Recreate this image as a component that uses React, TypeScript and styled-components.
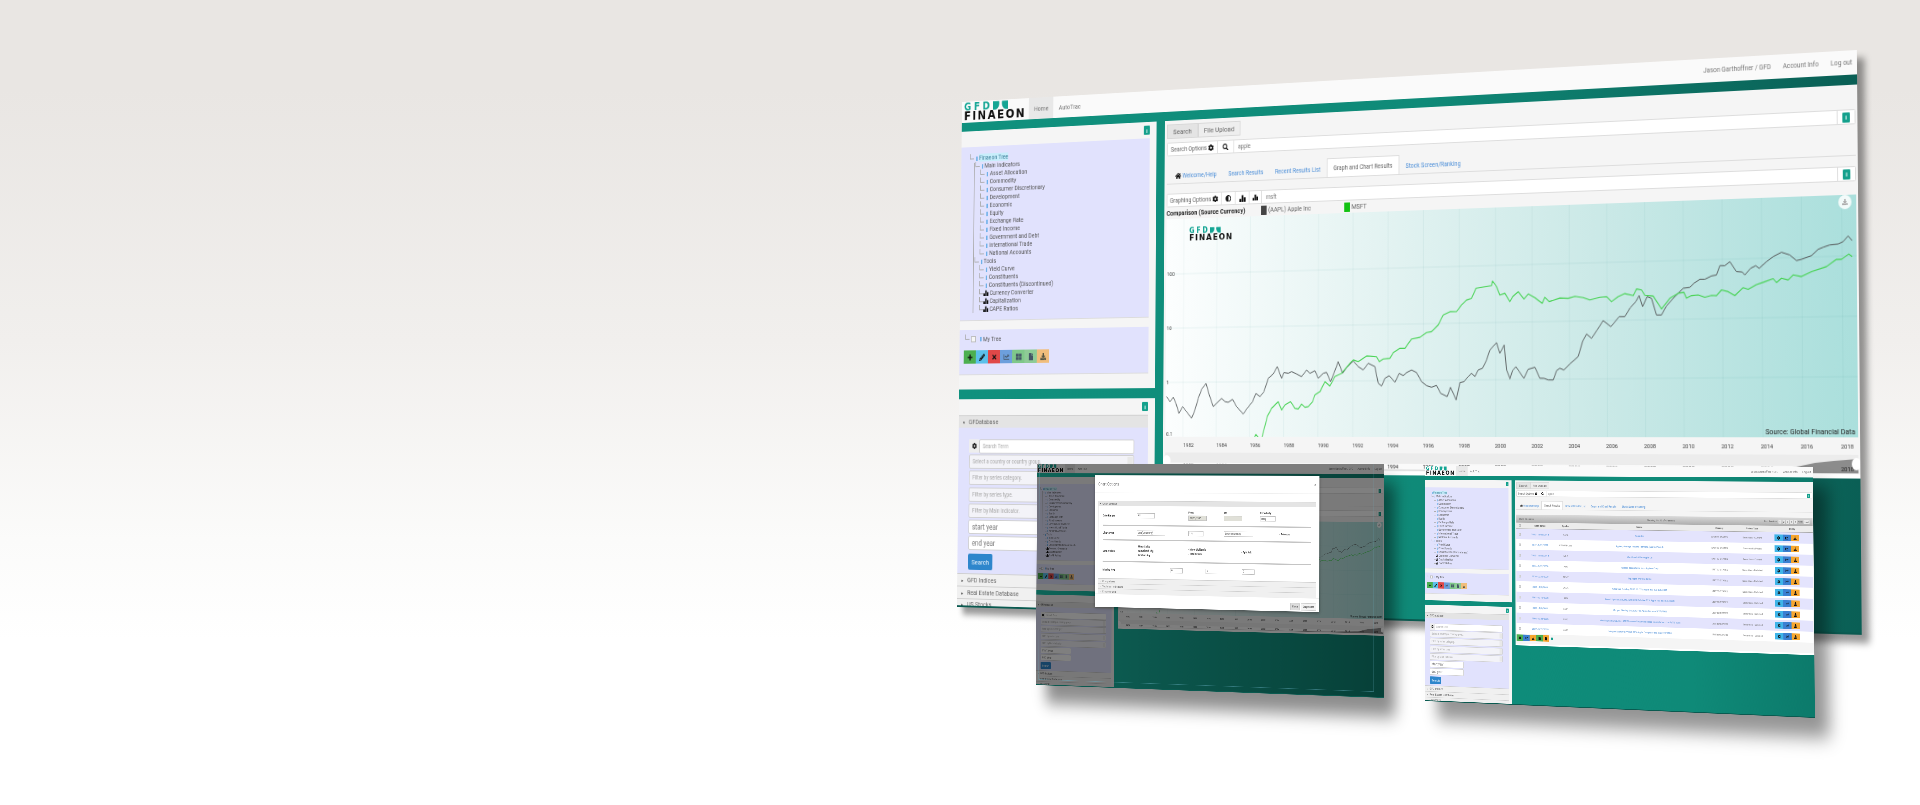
import React from "react";
import styled, { createGlobalStyle } from "styled-components";
import {
  FaAdjust, FaChartLine, FaCog, FaDownload, FaFile, FaHome,
  FaPencilAlt, FaPlus, FaSearch, FaThLarge, FaTimes,
} from "react-icons/fa";

// every screenshot in the banner is a normal 1100x570 page, put in perspective
const W = 1100;
const H = 570;

type Pt = [number, number];

const MAIN_QUAD: Pt[] = [[962, 102], [1857, 50], [1862, 635], [957, 607]];
const MODAL_QUAD: Pt[] = [[1037, 464], [1384, 464], [1384, 698], [1036, 685]];
const RESULTS_QUAD: Pt[] = [[1425, 466], [1813, 467], [1815, 718], [1425, 701]];

function solveQuad(q: Pt[]) {
  const [[x0, y0], [x1, y1], [x2, y2], [x3, y3]] = q;
  const dx1 = x1 - x2, dx2 = x3 - x2, sx = x0 - x1 + x2 - x3;
  const dy1 = y1 - y2, dy2 = y3 - y2, sy = y0 - y1 + y2 - y3;
  const det = dx1 * dy2 - dx2 * dy1;
  const g = (sx * dy2 - dx2 * sy) / det;
  const h = (dx1 * sy - sx * dy1) / det;
  return {
    a: x1 - x0 + g * x1, b: x3 - x0 + h * x3, c: x0,
    d: y1 - y0 + g * y1, e: y3 - y0 + h * y3, f: y0,
    g, h,
  };
}

function quadMatrix(q: Pt[]) {
  const { a, b, c, d, e, f, g, h } = solveQuad(q);
  return `matrix3d(${[a / W, d / W, 0, g / W, b / H, e / H, 0, h / H, 0, 0, 1, 0, c, f, 0, 1].join(",")})`;
}

// page position -> position inside the main screen
function toMainLocal(x: number, y: number): Pt {
  const { a, b, c, d, e, f, g, h } = solveQuad(MAIN_QUAD);
  const w = (d * h - e * g) * x + (b * g - a * h) * y + (a * e - b * d);
  const u = ((e - f * h) * x + (c * h - b) * y + (b * f - c * e)) / w;
  const v = ((f * g - d) * x + (a - c * g) * y + (c * d - a * f)) / w;
  return [u * W, v * H];
}

const BLACK_A = [20,590,30,605,40,592,48,610,57,640,68,620,80,635,95,655,105,630,115,595,125,568,138,550,148,585,160,620,170,610,185,595,195,605,205,607,218,598,230,620,250,642,262,625,278,605,288,580,300,590,312,575,325,535,340,522,352,500,365,535,372,518,385,520,395,515,410,522,425,530,440,510,450,520,465,512,475,535,490,520,500,517,512,545,522,520,535,485,548,520,560,503,580,483,595,500,610,510,625,490,645,500,655,550,665,558,675,535,688,527,705,547,718,520,730,527,740,518,755,510,770,518,785,545,800,557,815,562,830,556,842,580,862,590,872,562,889,600,900,548,912,545,925,530,935,520,945,530,955,510,968,505,980,480,990,450,1010,428,1020,460,1033,435,1040,510,1050,535];
const BLACK_B = [0,537,8,512,18,500,28,515,42,535,55,508,75,502,90,535,103,535,115,540,130,540,140,512,150,505,162,510,180,492,205,470,218,425,230,402,245,415,262,390,280,362,303,380,328,350,345,350,360,325,378,305,388,287,398,320,412,290,425,295,440,345,455,345,470,318,495,290,505,280,520,265,540,262,552,250,570,238,585,238,605,228,620,225,630,197,645,197,660,185,680,215,697,216,705,225,722,205,738,197,748,205,770,185,790,170,815,157,840,165,860,182,875,178,905,167,925,148,940,142,960,135,985,132,1000,125,1015,108,1027,122];
const GREEN_A = [280,718,288,703,300,718,305,716,315,678,322,650,335,625,345,615,355,605,365,630,375,615,392,605,405,625,415,627,425,612,435,622,445,620,458,605,465,585,480,575,495,545,510,558,525,530,545,520,570,490,580,480,595,485,620,468,650,470,658,485,670,477,690,475,700,458,720,445,735,445,755,417,780,412,800,398,815,395,835,375,850,345,870,335,890,335,905,315,920,300,935,295,948,265,975,260,995,257,998,243,1010,260,1020,285,1035,280,1050,305];
const GREEN_B = [0,305,8,290,25,275,42,297,55,282,75,293,97,310,105,292,118,305,150,294,175,295,195,289,220,293,240,300,270,292,290,290,305,305,325,290,345,281,370,287,380,267,395,270,405,286,430,288,455,327,480,295,505,280,522,277,530,295,545,287,565,285,585,292,605,286,620,287,635,270,655,275,675,287,700,263,715,268,740,254,760,247,790,236,800,248,815,235,835,240,850,225,875,230,905,215,950,200,980,178,995,178,1017,162,1027,170];

function tracePath(a: number[], b: number[]) {
  const pts: string[] = [];
  for (let i = 0; i < a.length; i += 2) pts.push(toMainLocal(1160 + a[i] / 3, 200 + a[i + 1] / 3).map((n) => n.toFixed(1)).join(","));
  for (let i = 0; i < b.length; i += 2) pts.push(toMainLocal(1510 + b[i] / 3, 200 + b[i + 1] / 3).map((n) => n.toFixed(1)).join(","));
  return pts.join(" ");
}

const YEARS = Array.from({ length: 19 }, (_, i) => 1982 + i * 2);

const TREE = [
  { label: "Finaeon Tree", depth: 0, on: true },
  { label: "Main Indicators", depth: 1 },
  { label: "Asset Allocation", depth: 2 },
  { label: "Commodity", depth: 2 },
  { label: "Consumer Discretionary", depth: 2 },
  { label: "Development", depth: 2 },
  { label: "Economic", depth: 2 },
  { label: "Equity", depth: 2 },
  { label: "Exchange Rate", depth: 2 },
  { label: "Fixed Income", depth: 2 },
  { label: "Government and Debt", depth: 2 },
  { label: "International Trade", depth: 2 },
  { label: "National Accounts", depth: 2 },
  { label: "Tools", depth: 1 },
  { label: "Yield Curve", depth: 2 },
  { label: "Constituents", depth: 2 },
  { label: "Constituents (Discontinued)", depth: 2 },
  { label: "Currency Converter", depth: 2, chart: true },
  { label: "Capitalization", depth: 2, chart: true },
  { label: "CAPE Ratios", depth: 2, chart: true },
];

const ROWS = [
  ["1980 - 11/15/2018", "AAPL", "Apple Inc", "Securities - Current"],
  ["1947 - 9/21/2018", "CBOAPPLEW", "Apples, Average Price to Farmers, (Cents/Pound)", "Commodity Prices"],
  ["1965 - 11/15/2018", "MLP", "Maui Land & Pineapple Co", "Securities - Current"],
  ["1956 - 9/21/2006", "ABG", "Applied Biosystems Inc - Applera Corp", "Securities - Delisted"],
  ["2010 - 2/24/2009", "BPNY", "Big Apple Worldwide Inc", "Securities - Delisted"],
  ["2006 - 9/6/2006", "ZCLA", "Citigroup Funding ELKS 12.00% Apple Inc. due 3/6/2008", "Securities - Delisted"],
  ["2007 - 8/10/2008", "AFN", "Merrill Lynch & Co., Inc. STRIDES Callable 12% Apple Inc. due 8/5/2008", "Securities - Delisted"],
  ["2006 - 9/6/2006", "AMPI", "Morgan Stanley SPARQS 10% Apple Inc. due 3/25/2008", "Securities - Delisted"],
  ["2006 - 8/24/2006", "IUGG", "Merrill Lynch & Co., Inc. STEP Income Securities linked to Apple Inc. due 6/25/2008", "Securities - Delisted"],
  ["2007 - 8/21/2008", "AMPI", "Morgan Stanley SPARQS 10% Apple Computer Inc. due 7/2/2008", "Securities - Delisted"],
];

const GlobalStyle = createGlobalStyle`
  html, body { margin: 0; height: 100%; overflow: hidden; }
  body { font-family: Roboto, "Liberation Sans", sans-serif; }
`;

const Stage = styled.div`
  position: relative;
  width: 1920px;
  height: 805px;
  overflow: hidden;
  background: linear-gradient(180deg, #e9e6e3 0, #e9e6e3 90px, #f1efed 340px, #fbfbfa 540px, #fff 640px);
`;

const Win = styled.div<{ $bg: string; $shadow: string; $blur: number }>`
  position: absolute;
  left: 0;
  top: 0;
  width: ${W}px;
  height: ${H}px;
  box-sizing: border-box;
  transform-origin: 0 0;
  display: flex;
  flex-direction: column;
  background: ${(p) => p.$bg};
  border-bottom: 2px solid #0a5a50;
  box-shadow: ${(p) => p.$shadow};
  filter: blur(${(p) => p.$blur}px);
  font-size: 7.5px;
  color: #555;
  svg { display: block; }
`;

const Head = styled.header`
  height: 24px;
  flex: none;
  display: flex;
  align-items: stretch;
  background: #fafafa;
  padding-left: 3px;
`;

const LogoBox = styled.div<{ $size: number }>`
  display: inline-flex;
  flex-direction: column;
  font-family: "DejaVu Sans", sans-serif;
  font-size: ${(p) => p.$size}px;
  font-weight: 700;
  line-height: 0.82;
  justify-content: center;
`;

const LogoTop = styled.div`
  display: flex;
  align-items: center;
  gap: 0.05em;
  color: #14a594;
  font-size: 0.86em;
  font-weight: 700;
  letter-spacing: 0.3em;
`;

const LogoBottom = styled.div`
  color: #111;
  letter-spacing: 0.14em;
`;

const HeadTab = styled.span<{ $on?: boolean }>`
  display: flex;
  align-items: center;
  padding: 0 7px;
  margin-left: ${(p) => (p.$on ? "4px" : "0")};
  background: ${(p) => (p.$on ? "#e8e8e8" : "transparent")};
  color: #777;
`;

const HeadRight = styled.div`
  margin-left: auto;
  display: flex;
  align-items: center;
  gap: 13px;
  padding-right: 5px;
  color: #777;
  font-size: 6.8px;
`;

const Body = styled.div<{ $left: number }>`
  flex: 1;
  min-height: 0;
  margin-top: 10px;
  display: grid;
  grid-template-columns: ${(p) => p.$left}px 1fr;
  column-gap: 11px;
  align-items: start;
`;

const LeftCol = styled.div`
  height: 534px;
  display: flex;
  flex-direction: column;
  gap: 11px;
`;

const Panel = styled.section<{ $h?: number }>`
  background: #f5f5f5;
  padding-right: 9px;
  overflow: hidden;
  ${(p) => (p.$h ? `height: ${p.$h}px; flex: none;` : "flex: 1; min-height: 0;")}
`;

const InfoRow = styled.div<{ $h: number }>`
  height: ${(p) => p.$h}px;
  display: flex;
  justify-content: flex-end;
  align-items: center;
`;

const InfoBtn = styled.span`
  width: 8px;
  height: 10px;
  display: inline-flex;
  align-items: center;
  justify-content: center;
  background: #14a08c;
  color: #fff;
  border-radius: 1px;
  font-size: 6px;
  font-weight: 700;
`;

const Lav = styled.div<{ $h: number; $mb?: number }>`
  height: ${(p) => p.$h}px;
  margin-bottom: ${(p) => p.$mb || 0}px;
  background: #e1e2fd;
  border-bottom: 1px solid #dcdcdc;
  position: relative;
`;

const TreeList = styled.div`
  position: relative;
  padding-top: 8px;
  &::before {
    content: "";
    position: absolute;
    left: 18px;
    top: 18px;
    height: 170px;
    border-left: 0.7px solid #aaa;
  }
`;

const TreeRow = styled.div<{ $depth: number }>`
  height: 9px;
  display: flex;
  align-items: center;
  padding-left: ${(p) => 12 + p.$depth * 7.7}px;
  font-size: 7.2px;
  color: #555;
  white-space: nowrap;
`;

const Elbow = styled.i`
  width: 5px;
  height: 5px;
  margin-top: -4px;
  flex: none;
  border-left: 0.7px solid #aaa;
  border-bottom: 0.7px solid #aaa;
`;

const TreeIcon = styled.i`
  width: 2px;
  height: 5px;
  margin: 1px 2px 0 3px;
  flex: none;
  background: #6fb1ea;
`;

const TreeChart = styled.span`
  width: 8px;
  flex: none;
  color: #111;
`;

const TreeText = styled.span<{ $on?: boolean }>`
  background: ${(p) => (p.$on ? "#c8eefb" : "transparent")};
  color: ${(p) => (p.$on ? "#3d7f9a" : "inherit")};
`;

const MyTreeRow = styled.div`
  display: flex;
  align-items: center;
  height: 20px;
  padding-left: 8px;
  font-size: 7.2px;
`;

const Check = styled.i`
  width: 5px;
  height: 5px;
  margin: 0 3px 0 2px;
  background: #f6f6f6;
  border: 0.5px solid #bbb;
`;

const Tools = styled.div`
  display: flex;
  margin-left: 6px;
  margin-top: 3px;
`;

const ToolBtn = styled.span<{ $c: string; $w?: number; $ink?: string }>`
  width: ${(p) => p.$w || 17}px;
  height: 15px;
  display: inline-flex;
  align-items: center;
  justify-content: center;
  background: ${(p) => p.$c};
  color: ${(p) => p.$ink || "#111"};
  font-size: 8px;
`;

const AccHead = styled.div<{ $h?: number; $on?: boolean }>`
  height: ${(p) => p.$h || 12}px;
  flex: none;
  display: flex;
  align-items: center;
  gap: 5px;
  padding-left: 6px;
  background: ${(p) => (p.$on ? "#e4e4e4" : "#f0f0f0")};
  border-top: 0.7px solid #cfcfcf;
  font-size: 7.6px;
  color: #666;
  &::before {
    content: "${(p) => (p.$on ? "▾" : "▸")}";
    font-size: 5px;
    color: #333;
  }
`;

const DbForm = styled.div`
  height: 163px;
  box-sizing: border-box;
  padding: 13px 18px 0 15px;
  display: flex;
  flex-direction: column;
  gap: 2.2px;
  background: #e1e2fd;
`;

const Field = styled.div<{ $narrow?: boolean; $big?: boolean; $grow?: boolean; $select?: boolean }>`
  position: relative;
  height: 14px;
  flex: ${(p) => (p.$grow ? "1" : "none")};
  display: flex;
  align-items: center;
  padding-left: 4px;
  width: ${(p) => (p.$narrow ? "95px" : "auto")};
  background: ${(p) => (p.$big || p.$grow ? "#fff" : "#f3f3f8")};
  border: 0.7px solid #d0d0d0;
  border-radius: 2px;
  color: ${(p) => (p.$big ? "#777" : "#aaa")};
  font-size: ${(p) => (p.$big ? 8.6 : 6.4)}px;
  ${(p) =>
    p.$select
      ? `&::after { content: ""; position: absolute; right: 1px; top: 1px; bottom: 1px; width: 7px; background: #e8e8e8; }`
      : ""}
`;

const FieldGroup = styled.div`
  display: flex;
  height: 15px;
  flex: none;
`;

const GearAddon = styled.span`
  width: 14px;
  display: flex;
  align-items: center;
  justify-content: center;
  background: #eee;
  color: #111;
  font-size: 7px;
`;

const SearchBtn = styled.span`
  width: 34px;
  height: 18px;
  margin-top: 2px;
  flex: none;
  display: flex;
  align-items: center;
  justify-content: center;
  background: #2e86cc;
  border-radius: 2px;
  color: #e8f2fb;
  font-size: 8px;
`;

const Right = styled.section<{ $h: number }>`
  height: ${(p) => p.$h}px;
  padding: 4px 2px 0 3px;
  background: #f5f5f5;
  border-bottom: 4px solid #fff;
  box-sizing: border-box;
  position: relative;
  overflow: hidden;
`;

const SmallTabs = styled.div`
  display: flex;
  height: 16px;
  font-size: 8px;
`;

const SmallTab = styled.span<{ $on?: boolean }>`
  display: flex;
  align-items: center;
  padding: 0 7px;
  background: ${(p) => (p.$on ? "#e4e4e4" : "#eee")};
  border: 0.7px solid #d8d8d8;
  color: #666;
`;

const Group = styled.div<{ $mt: number }>`
  height: 15px;
  margin-top: ${(p) => p.$mt}px;
  display: flex;
  background: #fff;
  border: 0.7px solid #ddd;
  box-sizing: border-box;
  border-radius: 1.5px;
`;

const Addon = styled.span<{ $w: number }>`
  width: ${(p) => p.$w}px;
  flex: none;
  display: flex;
  align-items: center;
  justify-content: center;
  gap: 2px;
  border-right: 0.7px solid #ddd;
  color: #666;
  font-size: 7px;
  svg { color: #111; font-size: 7.5px; }
`;

const GroupText = styled.span`
  flex: 1;
  padding-left: 5px;
  display: flex;
  align-items: center;
  font-size: 6.6px;
  color: #777;
`;

const GroupEnd = styled.span`
  width: 18px;
  display: flex;
  align-items: center;
  justify-content: center;
  border-left: 0.7px solid #ddd;
`;

const Nav = styled.nav`
  height: 19px;
  margin-top: 11px;
  display: flex;
  align-items: flex-end;
  padding-left: 3px;
  border-bottom: 0.7px solid #ddd;
  font-size: 6.8px;
`;

const NavTab = styled.span<{ $on?: boolean }>`
  height: ${(p) => (p.$on ? 19 : 16)}px;
  display: flex;
  align-items: center;
  gap: 2px;
  padding: 0 7.5px;
  color: ${(p) => (p.$on ? "#666" : "#4d8fd8")};
  background: ${(p) => (p.$on ? "#fff" : "transparent")};
  border: ${(p) => (p.$on ? "0.7px solid #ddd" : "0")};
  border-bottom: 0;
  svg { color: #111; font-size: 8px; }
`;

const Legend = styled.div`
  height: 13px;
  display: flex;
  align-items: center;
  font-size: 7.2px;
  color: #666;
`;

const LegendTitle = styled.b`
  width: 123px;
  flex: none;
  color: #222;
  font-size: 7.4px;
`;

const LegendItem = styled.span`
  width: 105px;
  flex: none;
  display: flex;
  align-items: center;
  gap: 2px;
`;

const Swatch = styled.i<{ $c: string }>`
  width: 7px;
  height: 10px;
  background: ${(p) => p.$c};
`;

const Plot = styled.div`
  position: relative;
  height: 237px;
  background: linear-gradient(90deg, #fcfefe 0, #e6f4f3 30%, #cbe9e7 65%, #aadfdc 100%);
`;

const PlotSvg = styled.svg`
  position: absolute;
  inset: 0;
  width: 100%;
  height: 100%;
`;

const PlotLogo = styled.div`
  position: absolute;
  left: 30px;
  top: 9px;
`;

const PlotSource = styled.span`
  position: absolute;
  right: 3px;
  bottom: 1px;
  font-size: 7.4px;
  color: #222;
`;

const SaveBtn = styled.span`
  position: absolute;
  right: 5px;
  top: 0;
  width: 14px;
  height: 14px;
  display: flex;
  align-items: center;
  justify-content: center;
  border-radius: 50%;
  background: rgba(255, 255, 255, 0.85);
  color: #aaa;
  font-size: 6px;
`;

const Axis = styled.div`
  display: grid;
  grid-template-columns: repeat(19, 43px);
  height: 17px;
  align-items: center;
  padding-left: 9px;
  font-size: 6px;
  color: #444;
  text-align: center;
`;

const Navigator = styled.div`
  position: relative;
  height: 18px;
  background: linear-gradient(180deg, #ececec 0, #ececec 11px, #fafafa 11px);
`;

const NavArea = styled.svg`
  position: absolute;
  inset: 0;
  width: 100%;
  height: 100%;
`;

const NavAxis = styled(Axis)`
  position: absolute;
  inset: 5px 0 0 0;
  height: 16px;
  color: #222;
`;

const Handle = styled.i<{ $side: "left" | "right" }>`
  position: absolute;
  ${(p) => p.$side}: -3px;
  top: 3px;
  width: 10px;
  height: 12px;
  border-radius: 50%;
  background: #fff;
`;

const Toolbar = styled.div`
  height: 19px;
  margin-top: 12px;
  display: grid;
  grid-template-columns: 1fr 1fr 1fr;
  align-items: center;
  padding: 0 8px;
  background: linear-gradient(180deg, #d9d9d9, #aeaeae);
  font-size: 6px;
  color: #555;
`;

const ToolbarMid = styled.span`
  text-align: center;
`;

const Pager = styled.span`
  justify-self: end;
  display: flex;
  gap: 3px;
  span { padding: 1px 2px; background: #e8e8e8; border-radius: 1px; }
`;

const TableRow = styled.div<{ $alt?: boolean; $head?: boolean }>`
  height: ${(p) => (p.$head ? 15 : 25)}px;
  display: grid;
  grid-template-columns: 19px 100px 48px 372px 72px 106px 1fr;
  align-items: center;
  text-align: center;
  font-size: 6.2px;
  color: #777;
  background: ${(p) => (p.$head ? "#ececec" : p.$alt ? "#e4e4fd" : "#fff")};
  border-bottom: ${(p) => (p.$head ? "1.5px solid #aaa" : "0")};
  box-sizing: border-box;
  ${(p) => (p.$head ? "color:#444;font-weight:500;" : "")}
`;

const Lnk = styled.span`
  color: #4d8fd8;
`;

const RowCheck = styled.i`
  width: 4px;
  height: 4px;
  justify-self: center;
  background: #ddd;
  border: 0.5px solid #bbb;
`;

const Utility = styled.span`
  display: flex;
  padding-left: 7px;
`;

const TableFoot = styled.div`
  display: flex;
  align-items: center;
  margin-top: 2px;
`;

const Dot = styled.i`
  width: 5px;
  height: 5px;
  margin-left: 5px;
  background: #14a08c;
`;

const Shade = styled.div`
  position: absolute;
  inset: 0;
  background: rgba(0, 0, 0, 0.5);
`;

const FrameLine = styled.div`
  position: absolute;
  left: 8px;
  top: 0;
  width: 1060px;
  height: 555px;
  border-right: 1px solid rgba(110, 180, 200, 0.45);
  border-bottom: 1px solid rgba(110, 180, 200, 0.45);
  border-left: 1px solid rgba(110, 180, 200, 0.3);
`;

const Dialog = styled.div`
  position: absolute;
  left: 194px;
  top: 29px;
  width: 711px;
  height: 336px;
  background: #fff;
  box-shadow: 0 2px 8px rgba(0, 0, 0, 0.4);
  color: #555;
  font-size: 7px;
  padding: 0 10px;
  box-sizing: border-box;
  display: flex;
  flex-direction: column;
`;

const DlgTitle = styled.div`
  height: 44px;
  display: flex;
  align-items: center;
  justify-content: space-between;
  border-bottom: 0.7px solid #eee;
  font-size: 11px;
  color: #666;
  margin: 0 -10px 0 -10px;
  padding: 0 10px;
  flex: none;
`;

const DlgSettings = styled.div`
  margin-top: 20px;
`;

const DlgBody = styled.div`
  height: 184px;
  padding: 0 14px;
  border: 0.7px solid #e2e2e2;
  border-top: 0;
`;

const DlgRow = styled.div<{ $cols: string; $h: number }>`
  display: grid;
  grid-template-columns: ${(p) => p.$cols};
  height: ${(p) => p.$h}px;
  align-items: center;
  border-bottom: 3px solid #c4c4c4;
  &:last-child { border-bottom: 0; }
`;

const Lbl = styled.b`
  font-weight: 700;
  color: #222;
  font-size: 7.6px;
`;

const Pick = styled.span<{ $w: number; $off?: boolean }>`
  width: ${(p) => p.$w}px;
  height: 13px;
  display: flex;
  align-items: center;
  padding-left: 3px;
  box-sizing: border-box;
  border: 0.7px solid #bbb;
  background: ${(p) => (p.$off ? "#e0e0d8" : "#fff")};
  font-size: 6.8px;
  font-weight: 400;
  color: #444;
`;

const Stack = styled.div`
  display: flex;
  flex-direction: column;
  gap: 3px;
  font-size: 7px;
  font-weight: 700;
  color: #333;
`;

const DlgFoot = styled.div`
  margin-top: auto;
  height: 42px;
  display: flex;
  justify-content: flex-end;
  align-items: center;
  gap: 3px;
  border-top: 0.7px solid #eee;
  margin-left: -10px;
  margin-right: -10px;
  padding-right: 10px;
  flex: none;
`;

const DlgBtn = styled.span<{ $on?: boolean }>`
  padding: 4px 5px;
  background: ${(p) => (p.$on ? "#ddd" : "#f4f4f4")};
  border: 0.7px solid #ccc;
  border-radius: 1px;
  color: #333;
`;

function Leaves({ w, h }: { w: string; h: string }) {
  return (
    <svg width={w} height={h} viewBox="0 0 20 9">
      <path d="M0 0h8c1 4-1 9-5 9H0z M20 0h-8c-1 4 1 9 5 9h3z" fill="#14a594" />
    </svg>
  );
}

function Bars({ s }: { s: number }) {
  return (
    <svg width={s} height={s} viewBox="0 0 10 10" fill="currentColor">
      <rect x="0" y="6" width="3" height="4" />
      <rect x="3.5" y="1" width="3" height="9" />
      <rect x="7" y="4" width="3" height="6" />
    </svg>
  );
}

function Logo({ size }: { size: number }) {
  return (
    <LogoBox $size={size}>
      <LogoTop>
        GFD
        <Leaves w="1.7em" h="0.8em" />
      </LogoTop>
      <LogoBottom>FINAEON</LogoBottom>
    </LogoBox>
  );
}

function Header() {
  return (
    <Head>
      <Logo size={14.5} />
      <HeadTab $on>Home</HeadTab>
      <HeadTab>AutoTrac</HeadTab>
      <HeadRight>
        <span>Jason Garthoffner / GFD</span>
        <span>Account Info</span>
        <span>Log out</span>
      </HeadRight>
    </Head>
  );
}

function LeftColumn() {
  return (
    <LeftCol>
      <Panel $h={292}>
        <InfoRow $h={18}><InfoBtn>i</InfoBtn></InfoRow>
        <Lav $h={196} $mb={10}>
          <TreeList>
            {TREE.map((t) => (
              <TreeRow key={t.label} $depth={t.depth}>
                <Elbow />
                {t.chart ? <TreeChart><Bars s={7} /></TreeChart> : <TreeIcon />}
                <TreeText $on={t.on}>{t.label}</TreeText>
              </TreeRow>
            ))}
          </TreeList>
        </Lav>
        <Lav $h={50}>
          <MyTreeRow><Elbow /><Check /><TreeIcon />My Tree</MyTreeRow>
          <Tools>
            <ToolBtn $c="#4caf50"><FaPlus /></ToolBtn>
            <ToolBtn $c="#5bc0ea"><FaPencilAlt /></ToolBtn>
            <ToolBtn $c="#e04848"><FaTimes /></ToolBtn>
            <ToolBtn $c="#6d9fdc" $ink="#456"><FaChartLine /></ToolBtn>
            <ToolBtn $c="#7fc88a" $ink="#456"><FaThLarge /></ToolBtn>
            <ToolBtn $c="#8ecb96" $ink="#456"><FaFile /></ToolBtn>
            <ToolBtn $c="#f0bd7c" $ink="#554"><FaDownload /></ToolBtn>
          </Tools>
        </Lav>
      </Panel>
      <Panel>
        <InfoRow $h={18}><InfoBtn>i</InfoBtn></InfoRow>
        <AccHead $on $h={13}>GFDatabase</AccHead>
        <DbForm>
          <FieldGroup>
            <GearAddon><FaCog /></GearAddon>
            <Field $grow>Search Term</Field>
          </FieldGroup>
          <Field $select>Select a country or country group.</Field>
          <Field $select>Filter by series category.</Field>
          <Field $select>Filter by series type.</Field>
          <Field $select>Filter by Main Indicator.</Field>
          <Field $narrow $big>start year</Field>
          <Field $narrow $big>end year</Field>
          <SearchBtn>Search</SearchBtn>
        </DbForm>
        <AccHead $h={13}>GFD Indices</AccHead>
        <AccHead $h={13}>Real Estate Database</AccHead>
        <AccHead $h={11}>US Stocks</AccHead>
      </Panel>
    </LeftCol>
  );
}

function SearchBlock({ active }: { active: string }) {
  return (
    <>
      <SmallTabs>
        <SmallTab $on>Search</SmallTab>
        <SmallTab>File Upload</SmallTab>
      </SmallTabs>
      <Group $mt={4}>
        <Addon $w={65}>Search Options <FaCog /></Addon>
        <Addon $w={20}><FaSearch /></Addon>
        <GroupText>apple</GroupText>
        <GroupEnd><InfoBtn>i</InfoBtn></GroupEnd>
      </Group>
      <Nav>
        <NavTab $on={active === "Welcome/Help"}><FaHome />Welcome/Help</NavTab>
        {["Search Results", "Recent Results List", "Graph and Chart Results", "Stock Screen/Ranking"].map((t) => (
          <NavTab key={t} $on={active === t}>{t}</NavTab>
        ))}
      </Nav>
    </>
  );
}

function ChartPanel({ h }: { h: number }) {
  const black = tracePath(BLACK_A, BLACK_B);
  const green = tracePath(GREEN_A, GREEN_B);
  return (
    <Right $h={h}>
      <SearchBlock active="Graph and Chart Results" />
      <Group $mt={10}>
        <Addon $w={70}>Graphing Options <FaCog /></Addon>
        <Addon $w={17}><FaAdjust /></Addon>
        <Addon $w={17}><Bars s={8} /></Addon>
        <Addon $w={15}><Bars s={7} /></Addon>
        <GroupText>msft</GroupText>
        <GroupEnd><InfoBtn>i</InfoBtn></GroupEnd>
      </Group>
      <Legend>
        <LegendTitle>Comparison (Source Currency)</LegendTitle>
        <LegendItem><Swatch $c="#444" />(AAPL) Apple Inc</LegendItem>
        <LegendItem><Swatch $c="#13c213" />MSFT</LegendItem>
      </Legend>
      <Plot>
        <PlotSvg viewBox="282 142 816 237">
          {YEARS.map((y, i) => (
            <line key={y} x1={305 + i * 43.2} x2={305 + i * 43.2} y1={142} y2={379} stroke="#2a7f7a" strokeOpacity={0.06} strokeWidth={1} />
          ))}
          {[202, 261, 320].map((y) => (
            <line key={y} x1={282} x2={1098} y1={y} y2={y} stroke="#2a7f7a" strokeOpacity={0.08} strokeWidth={1} />
          ))}
          <text x={283} y={204} fontSize={6} fill="#444">100</text>
          <text x={283} y={263} fontSize={6} fill="#444">10</text>
          <text x={283} y={322} fontSize={6} fill="#444">1</text>
          <text x={283} y={378} fontSize={6} fill="#444">0.1</text>
          <polyline points={black} fill="none" stroke="#5a5f60" strokeWidth={1} strokeLinejoin="round" />
          <polyline points={green} fill="none" stroke="#49d355" strokeWidth={1.1} strokeLinejoin="round" />
        </PlotSvg>
        <PlotLogo><Logo size={9.5} /></PlotLogo>
        <PlotSource>Source: Global Financial Data</PlotSource>
        <SaveBtn><FaDownload /></SaveBtn>
      </Plot>
      <Axis>{YEARS.map((y) => <span key={y}>{y}</span>)}</Axis>
      <Navigator>
        <NavArea viewBox="0 0 816 18" preserveAspectRatio="none">
          <path d="M0 18L500 17.5L650 16.5L740 14L770 8L790 6L816 4V18Z" fill="#8c8c8c" />
        </NavArea>
        <NavAxis>{YEARS.map((y) => <span key={y}>{y}</span>)}</NavAxis>
        <Handle $side="left" />
        <Handle $side="right" />
      </Navigator>
    </Right>
  );
}

function ResultsPanel() {
  return (
    <Right $h={394}>
      <SearchBlock active="Search Results" />
      <Toolbar>
        <span>Show 10 entries</span>
        <ToolbarMid>Showing 1 to 10 of 47 entries</ToolbarMid>
        <Pager>First Previous <span>1</span><span>2</span><span>3</span><span>4</span><span>5</span> Next <span>Last</span></Pager>
      </Toolbar>
      <TableRow $head>
        <RowCheck />
        <span>Date Range</span><span>Symbol</span><span>Name</span><span>Country</span><span>Status Type</span><span>Utility</span>
      </TableRow>
      {ROWS.map((r, i) => (
        <TableRow key={r[2]} $alt={i % 2 === 0}>
          <RowCheck />
          <Lnk>{r[0]}</Lnk>
          <span>{r[1]}</span>
          <Lnk>{r[2]}</Lnk>
          <span>UNITED STATES</span>
          <span>{r[3]}</span>
          <Utility>
            <ToolBtn $c="#3fb4e8" $w={22}><FaCog /></ToolBtn>
            <ToolBtn $c="#3a80d2" $w={22}><FaChartLine /></ToolBtn>
            <ToolBtn $c="#f6a62f" $w={22}><FaDownload /></ToolBtn>
          </Utility>
        </TableRow>
      ))}
      <TableFoot>
        <ToolBtn $c="#4caf50" $w={19}><FaCog /></ToolBtn>
        <ToolBtn $c="#3a80d2" $w={19}><FaChartLine /></ToolBtn>
        <ToolBtn $c="#f6a62f" $w={19}><FaDownload /></ToolBtn>
        <ToolBtn $c="#4caf50" $w={19}><FaFile /></ToolBtn>
        <ToolBtn $c="#f6a62f" $w={19}><FaFile /></ToolBtn>
        <Dot />
      </TableFoot>
    </Right>
  );
}

function ChartOptions() {
  return (
    <Dialog>
      <DlgTitle>Chart Options<span>×</span></DlgTitle>
      <DlgSettings>
        <AccHead $on>Chart Settings</AccHead>
        <DlgBody>
          <DlgRow $cols="111px 166px 112px 114px 1fr" $h={48}>
            <Lbl>Date Range</Lbl>
            <Pick $w={58}>All</Pick>
            <Stack>From:<Pick $w={58} $off>01/01/1980</Pick></Stack>
            <Stack>To:<Pick $w={58} $off /></Stack>
            <Stack>Periodicity:<Pick $w={48}>Daily</Pick></Stack>
          </DlgRow>
          <DlgRow $cols="111px 166px 112px 174px 1fr" $h={34}>
            <Lbl>Chart Type</Lbl>
            <Pick $w={92}>Line(Close Only)</Pick>
            <Pick $w={48}>Log</Pick>
            <Pick $w={92}>Source Currency</Pick>
            <Stack>▫ Autosize</Stack>
          </DlgRow>
          <DlgRow $cols="111px 166px 168px 1fr" $h={52}>
            <Lbl>Data Points</Lbl>
            <Stack><span>▫ Minor Splits</span><span>▫ Annual Dvd Chg</span><span>▫ Inflation Adj</span></Stack>
            <Stack><span>▫ Minor Dividends</span><span>▫ Total Return</span></Stack>
            <Stack>▪ Split Adj</Stack>
          </DlgRow>
          <DlgRow $cols="219px 113px 114px 1fr" $h={38}>
            <Lbl>Moving Avg</Lbl>
            <Pick $w={40}>0</Pick>
            <Pick $w={40}>0</Pick>
            <Pick $w={40}>0</Pick>
          </DlgRow>
        </DlgBody>
      </DlgSettings>
      <AccHead>Comparison</AccHead>
      <AccHead>Technical Indicators</AccHead>
      <AccHead>Chronological</AccHead>
      <DlgFoot>
        <DlgBtn $on>Close</DlgBtn>
        <DlgBtn>Graph Data</DlgBtn>
      </DlgFoot>
    </Dialog>
  );
}

export default function App() {
  return (
    <Stage>
      <GlobalStyle />
      <Win
        $bg="linear-gradient(90deg, #10917e 0, #0f8a78 55%, #0a5f55 100%)"
        $shadow="8px 8px 7px rgba(0,0,0,0.4)"
        $blur={0.3}
        style={{ transform: quadMatrix(MAIN_QUAD) }}
      >
        <Header />
        <Body $left={268}>
          <LeftColumn />
          <ChartPanel h={385} />
        </Body>
      </Win>

      <Win
        $bg="linear-gradient(90deg, #1cc9b0 0, #18b09c 30%, #0d8070 100%)"
        $shadow="34px 46px 40px rgba(0,0,0,0.45)"
        $blur={0.4}
        style={{ transform: quadMatrix(MODAL_QUAD) }}
      >
        <Header />
        <Body $left={258}>
          <LeftColumn />
          <ChartPanel h={385} />
        </Body>
        <Shade />
        <FrameLine />
        <ChartOptions />
      </Win>

      <Win
        $bg="linear-gradient(90deg, #0e8d7b 0, #0f8a78 70%, #0c7a6b 100%)"
        $shadow="38px 44px 40px rgba(0,0,0,0.42)"
        $blur={0.45}
        style={{ transform: quadMatrix(RESULTS_QUAD) }}
      >
        <Header />
        <Body $left={258}>
          <LeftColumn />
          <ResultsPanel />
        </Body>
      </Win>
    </Stage>
  );
}
